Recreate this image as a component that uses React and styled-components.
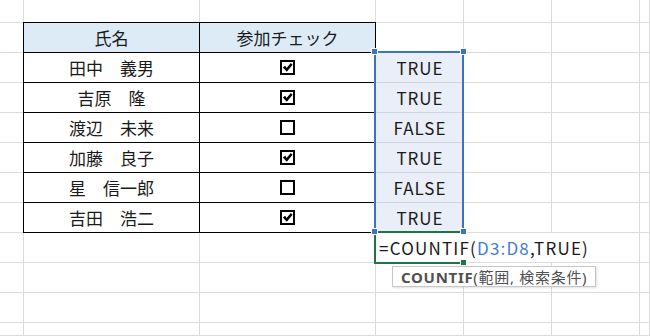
import React from 'react';
import styled, { createGlobalStyle } from 'styled-components';

const GRIDLINE = '#dcdcdc';
const REF_BLUE = '#3b72c6';
const EDIT_GREEN = '#217346';

const GlobalStyle = createGlobalStyle`
  html, body {
    margin: 0;
    padding: 0;
    background: #fff;
  }
  body {
    font-family: 'Noto Sans CJK JP', 'Noto Sans', sans-serif;
    color: #000;
  }
`;

const Sheet = styled.div`
  display: grid;
  grid-template-columns: 24px 176px 176px 88px 88px 88px 1fr;
  grid-template-rows: 23px repeat(10, 30px) 1fr;
  width: 650px;
  height: 336px;
  overflow: hidden;
  position: relative;
  background: #fff;
`;

const GridCell = styled.div`
  grid-row: ${p => p.$row};
  grid-column: ${p => p.$col};
  border-right: 1px solid ${GRIDLINE};
  border-bottom: 1px solid ${GRIDLINE};
`;

const Table = styled.div`
  grid-area: 2 / 2 / 9 / 4;
  margin: -1px 0 0 -1px;
  display: grid;
  grid-template-columns: 1fr 1fr;
  grid-auto-rows: 1fr;
  border-left: 1px solid #000;
  border-top: 1px solid #000;
  background: #fff;
  font-size: 17px;
`;

const TableCell = styled.div`
  display: flex;
  align-items: center;
  justify-content: center;
  border-right: 1px solid #000;
  border-bottom: 1px solid #000;
  background: ${p => (p.$head ? '#ddebf7' : '#fff')};
  color: #1a1a1a;
  white-space: pre;
`;

const RefRange = styled.div`
  grid-area: 3 / 4 / 9 / 5;
  position: relative;
  display: flex;
  flex-direction: column;
  background: #e9eef8;
`;

const RefFrame = styled.div`
  position: absolute;
  top: -2px;
  left: -2px;
  right: 0;
  bottom: 0;
  border: 2px solid ${REF_BLUE};
  pointer-events: none;
`;

const Handle = styled.span`
  position: absolute;
  z-index: 3;
  width: 5px;
  height: 5px;
  border: 1px solid #fff;
  background: ${p => p.$color};
  ${p => p.$pos};
`;

const RefCell = styled.div`
  flex: 1;
  display: flex;
  align-items: center;
  justify-content: center;
  border-bottom: 1px solid #cfd5df;
  font-size: 17px;
  letter-spacing: 1px;
  color: #1a1a1a;
`;

const EditCell = styled.div`
  grid-area: 9 / 4 / 10 / 5;
  position: relative;
`;

const EditFrame = styled.div`
  position: absolute;
  z-index: 2;
  top: -2px;
  left: -2px;
  right: 0;
  bottom: -1px;
  border: 2px solid ${EDIT_GREEN};
  border-right: none;
`;

const Editor = styled.div`
  position: absolute;
  z-index: 1;
  top: 0;
  left: 0;
  bottom: 1px;
  width: 222px;
  display: flex;
  align-items: center;
  padding-left: 3px;
  background: #fff;
  font-size: 17px;
  letter-spacing: 1.2px;
  color: #1a1a1a;
  white-space: pre;
`;

const Ref = styled.span`
  color: #3f7dcf;
`;

const Tooltip = styled.div`
  position: absolute;
  z-index: 4;
  top: 33px;
  left: 16px;
  height: 19px;
  display: flex;
  align-items: center;
  padding: 0 8px;
  border: 1px solid #c6c6c6;
  background: #fff;
  box-shadow: 1px 1px 2px rgba(0, 0, 0, 0.12);
  font-family: 'Noto Sans', 'Noto Sans CJK JP', sans-serif;
  font-size: 15px;
  letter-spacing: 0.7px;
  color: #505050;
  white-space: pre;

  b {
    font-weight: 700;
  }
`;

const CheckBox = ({ checked }) => (
  <svg width="15" height="15" viewBox="0 0 15 15">
    <rect x="1" y="1" width="13" height="13" fill="#fff" stroke="#000" strokeWidth="2" />
    {checked && (
      <path d="M2.8 7.6 L5.2 5.8 L6.6 8 L10.8 3 L12.6 4.8 L6.8 11.8 Z" fill="#000" />
    )}
  </svg>
);

const members = [
  { name: '田中　義男', joined: true },
  { name: '吉原　隆', joined: true },
  { name: '渡辺　未来', joined: false },
  { name: '加藤　良子', joined: true },
  { name: '星　信一郎', joined: false },
  { name: '吉田　浩二', joined: true },
];

const gridCells = [];
for (let r = 1; r <= 12; r++) {
  for (let c = 1; c <= 7; c++) {
    gridCells.push(<GridCell key={`${r}-${c}`} $row={r} $col={c} />);
  }
}

export default function App() {
  return (
    <>
      <GlobalStyle />
      <Sheet>
        {gridCells}

        <Table>
          <TableCell $head>氏名</TableCell>
          <TableCell $head>参加チェック</TableCell>
          {members.map(m => (
            <React.Fragment key={m.name}>
              <TableCell>{m.name}</TableCell>
              <TableCell>
                <CheckBox checked={m.joined} />
              </TableCell>
            </React.Fragment>
          ))}
        </Table>

        <RefRange>
          {members.map(m => (
            <RefCell key={m.name}>{m.joined ? 'TRUE' : 'FALSE'}</RefCell>
          ))}
          <RefFrame />
          <Handle $color={REF_BLUE} $pos="top: -5px; left: -5px;" />
          <Handle $color={REF_BLUE} $pos="top: -5px; right: -3px;" />
          <Handle $color={REF_BLUE} $pos="bottom: -2px; left: -5px;" />
          <Handle $color={REF_BLUE} $pos="bottom: -2px; right: -3px;" />
        </RefRange>

        <EditCell>
          <Editor>
            =COUNTIF(<Ref>D3:D8</Ref>,TRUE)
          </Editor>
          <EditFrame />
          <Handle $color={EDIT_GREEN} $pos="bottom: -3px; right: -3px;" />
          <Tooltip>
            <b>COUNTIF</b>(範囲, 検索条件)
          </Tooltip>
        </EditCell>
      </Sheet>
    </>
  );
}
